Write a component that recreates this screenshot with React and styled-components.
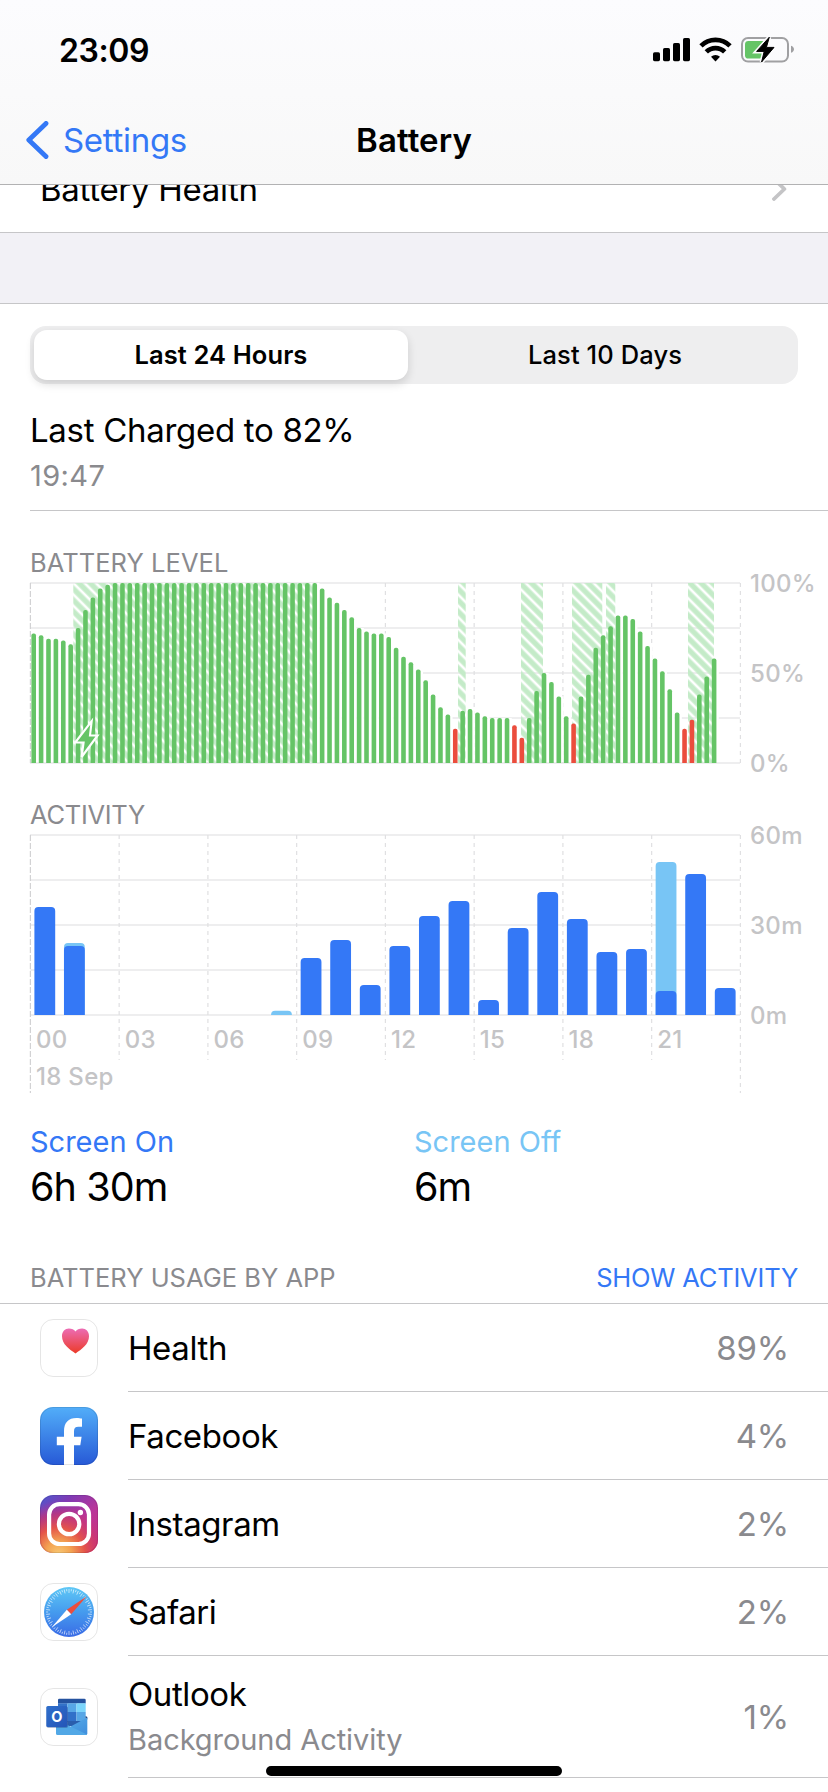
import React, { Component } from 'react';
import styled, { createGlobalStyle } from 'styled-components';

const GlobalStyle = createGlobalStyle`
	* {
		box-sizing: border-box;
	}
	body {
		margin: 0;
		background: #fff;
		color: #000;
		font-family: Inter, 'Liberation Sans', sans-serif;
		font-size: 33px;
	}
`;

const Screen = styled.div`
	width: 828px;
	height: 1792px;
	overflow: hidden;
	position: relative;
	background: #fff;
`;

const Header = styled.header`
	height: 185px;
	border-bottom: 1px solid #b2b2b3;
	background: linear-gradient(#fcfcfe, #f8f8f8);
`;

const StatusBar = styled.div`
	display: flex;
	justify-content: space-between;
	align-items: center;
	height: 100px;
	padding: 0 33px 0 59px;
`;

const Clock = styled.span`
	font-size: 32px;
	font-weight: 600;
	letter-spacing: -0.4px;
`;

const NavBar = styled.nav`
	display: grid;
	grid-template-columns: 1fr auto 1fr;
	align-items: center;
	height: 80px;
	padding: 0 26px;
`;

const BackLink = styled.a`
	display: flex;
	align-items: center;
	gap: 14px;
	color: #3478f6;
	letter-spacing: -0.3px;
`;

const NavTitle = styled.h1`
	margin: 0;
	font-size: 33px;
	font-weight: 600;
	letter-spacing: 0.1px;
`;

const HealthClip = styled.div`
	display: flex;
	align-items: flex-end;
	height: 48px;
	overflow: hidden;
	border-bottom: 1px solid #c6c6c8;
`;

const HealthRow = styled.div`
	flex: 1;
	display: flex;
	justify-content: space-between;
	align-items: center;
	height: 87px;
	flex-shrink: 0;
	padding: 0 41px 0 40px;
	letter-spacing: -0.3px;
`;

const Spacer = styled.div`
	height: 70px;
	background: #f2f1f6;
`;

const Panel = styled.section`
	border-top: 1px solid #c6c6c8;
	padding-top: 22px;
`;

const Segments = styled.div`
	display: flex;
	height: 58px;
	margin: 0 30px;
	padding: 4px;
	border-radius: 16px;
	background: #eeeeef;
`;

const Segment = styled.button`
	width: ${props => (props.$active ? '374px' : 'auto')};
	flex: ${props => (props.$active ? 'none' : '1')};
	border: 0;
	padding: ${props => (props.$active ? '0 0 2px' : '0 0 2px 8px')};
	border-radius: 13px;
	font-family: inherit;
	font-size: 25.5px;
	font-weight: ${props => (props.$active ? 600 : 500)};
	letter-spacing: 0.1px;
	color: #000;
	background: ${props => (props.$active ? '#fff' : 'transparent')};
	box-shadow: ${props =>
		props.$active ? '0 4px 10px rgba(0, 0, 0, 0.14)' : 'none'};
`;

const LastCharge = styled.div`
	margin: 26px 0 0 30px;
	padding-bottom: 16px;
	border-bottom: 1px solid #c6c6c8;
`;

const ChargeTitle = styled.div`
	line-height: 40px;
	letter-spacing: -0.3px;
`;

const ChargeTime = styled.div`
	margin-top: 7px;
	font-size: 29px;
	line-height: 37px;
	letter-spacing: 0.4px;
	color: #8a8a8e;
`;

const ChartTitle = styled.h2`
	margin: ${props => props.$top}px 0 0 30px;
	font-size: 25.5px;
	font-weight: 400;
	line-height: 32px;
	letter-spacing: ${props => props.$spacing}px;
	color: #8a8a8e;
`;

const Chart = styled.svg`
	display: block;
	overflow: visible;

	text {
		font-size: 24px;
		font-weight: 500;
		letter-spacing: 0.3px;
		fill: #c4c4c6;
	}
`;

const Totals = styled.div`
	display: grid;
	grid-template-columns: 384px 384px;
	margin: 26px 30px 0;
`;

const TotalLabel = styled.div`
	font-size: 29px;
	line-height: 37px;
	color: ${props => props.$color};
`;

const TotalValue = styled.div`
	margin-top: 4px;
	font-size: 39.5px;
	line-height: 47px;
	letter-spacing: -0.9px;
`;

const UsageHeader = styled.div`
	display: flex;
	justify-content: space-between;
	margin-top: 51px;
	padding: 0 30px 9px;
	border-bottom: 1px solid #c6c6c8;
	font-size: 25.5px;
	line-height: 32px;
	letter-spacing: 0;
	color: #8a8a8e;
`;

const ShowActivity = styled.a`
	letter-spacing: -0.2px;
	color: #3478f6;
`;

const AppRow = styled.div`
	display: flex;
	align-items: center;
	gap: 30px;
	height: ${props => (props.$tall ? 122 : 88)}px;
	padding-left: 40px;
`;

const AppBody = styled.div`
	flex: 1;
	align-self: stretch;
	display: flex;
	justify-content: space-between;
	align-items: center;
	padding-right: 39px;
	border-bottom: 1px solid #c6c6c8;
`;

const AppName = styled.div`
	line-height: 46px;
	letter-spacing: -0.4px;
`;

const AppNote = styled.div`
	font-size: 29px;
	line-height: 45px;
	letter-spacing: -0.06px;
	color: #8a8a8e;
`;

const AppPercent = styled.div`
	letter-spacing: -0.2px;
	color: #8a8a8e;
`;

const HomeIndicator = styled.div`
	position: absolute;
	left: 266px;
	bottom: 16px;
	width: 296px;
	height: 10px;
	border-radius: 5px;
	background: #000;
`;

// plot area: 24 hours over 710px, 180px high
const LEFT = 30;
const RIGHT = 740;
const TOP = 4;
const BOTTOM = 184;

// one reading every 15 minutes
const levels = [
	72, 71, 69, 69, 68, 66, 75, 85, 92, 97, 99,
	...Array(28).fill(100),
	97, 92, 89, 85, 81, 75, 73, 72, 72, 70, 64, 59, 56, 52, 46, 38, 31, 27,
	19, 29, 30, 28, 26, 25, 25, 25, 21, 14, 25, 40, 50, 45, 37, 26, 22, 37,
	49, 64, 71, 76, 82, 82, 80, 73, 65, 58, 51, 41, 28, 19, 24, 38, 48, 58
];
const low = [57, 65, 66, 73, 88, 89];
const charging = [
	[73.3, 313],
	[458, 465.7],
	[521, 543],
	[572, 602.3],
	[606, 615.3],
	[688, 714]
];

// [screen on, total] minutes per hour
const activity = [
	[36, 36], [23, 24], [0, 0], [0, 0], [0, 0], [0, 0], [0, 0], [0, 0],
	[0, 1.4], [19, 19], [25, 25], [10, 10], [23, 23], [33, 33], [38, 38],
	[5, 5], [29, 29], [41, 41], [32, 32], [21, 21], [22, 22], [8, 51],
	[47, 47], [9, 9]
];

const hours = ['00', '03', '06', '09', '12', '15', '18', '21'];

const apps = [
	{ name: 'Health', percent: 89, icon: 'health' },
	{ name: 'Facebook', percent: 4, icon: 'facebook' },
	{ name: 'Instagram', percent: 2, icon: 'instagram' },
	{ name: 'Safari', percent: 2, icon: 'safari' },
	{ name: 'Outlook', percent: 1, icon: 'outlook', note: 'Background Activity' }
];

const Grid = ({ end, outerEnd }) => (
	<g>
		{[0, 45, 90, 135, 180].map(y => (
			<path
				key={y}
				d={`M${LEFT} ${TOP + y}H${RIGHT}`}
				stroke="#eeeeef"
				strokeWidth="2"
			/>
		))}
		{[0, 1, 2, 3, 4, 5, 6, 7, 8].map(i => (
			<path
				key={i}
				d={`M${LEFT + 0.4 + i * 88.75} ${TOP}V${
					i === 0 || i === 8 ? outerEnd : end
				}`}
				stroke={i === 0 ? '#d2d2d4' : '#e0e0e2'}
				strokeWidth="1.2"
				strokeDasharray={i === 0 ? '6 2' : '4 4'}
			/>
		))}
	</g>
);

// bar with only its top corners rounded
const barPath = (x, w, h, r) => {
	const y = BOTTOM - h;
	const c = Math.min(r, h);
	return `M${x} ${BOTTOM}V${y + c}q0 ${-c} ${c} ${-c}h${w - 2 * c}q${c} 0 ${c} ${c}V${BOTTOM}z`;
};

const LevelChart = () => {
	const step = (RIGHT - LEFT) / 96;
	return (
		<Chart width="828" height="190" viewBox="0 0 828 190">
			<defs>
				<pattern
					id="hatch"
					width="8"
					height="8"
					patternUnits="userSpaceOnUse"
					patternTransform="translate(73.3 4) rotate(45)"
				>
					<rect y="1.4" width="8" height="5.3" fill="#c4ebc8" />
				</pattern>
			</defs>
			<Grid end={BOTTOM} outerEnd={BOTTOM} />
			{levels.map((level, i) => (
				<rect
					key={i}
					x={LEFT + 1 + i * step}
					y={BOTTOM - level * 1.8}
					width={step}
					height={level * 1.8 - 1}
					fill="#fff"
				/>
			))}
			{charging.map(([from, to]) => (
				<rect
					key={from}
					x={from}
					y={TOP}
					width={to - from}
					height={BOTTOM - TOP}
					fill="url(#hatch)"
				/>
			))}
			{levels.map((level, i) => (
				<path
					key={i}
					d={barPath(LEFT + (i + 0.5) * step - 2.3, 4.6, level * 1.8, 2)}
					fill={low.includes(i) ? '#eb4d3d' : '#65c466'}
				/>
			))}
			<path
				d="M91.7 142.2L90 156.5H97.6L81.6 178L83.6 163.5H75.2Z"
				fill="#65c466"
				stroke="#fff"
				strokeWidth="2.1"
			/>
			<text x="750" y="12.5">100%</text>
			<text x="750" y="102.5">50%</text>
			<text x="750" y="192.5">0%</text>
		</Chart>
	);
};

const ActivityChart = () => (
	<Chart width="828" height="266" viewBox="0 0 828 266">
		<Grid end={229} outerEnd={262} />
		{activity.map(([on, total], i) => {
			const x = LEFT + 4.4 + (i * 710) / 24;
			return (
				<g key={i}>
					{total > on && (
						<path d={barPath(x, 20.8, total * 3, 4)} fill="#78c5f5" />
					)}
					{on > 0 && <path d={barPath(x, 20.8, on * 3, 4)} fill="#3478f6" />}
				</g>
			);
		})}
		{hours.map((hour, i) => (
			<text key={hour} x={36 + i * 88.75} y="217">
				{hour}
			</text>
		))}
		<text x="36" y="253.5">18 Sep</text>
		<text x="750" y="12.5">60m</text>
		<text x="750" y="102.5">30m</text>
		<text x="750" y="192.5">0m</text>
	</Chart>
);

const StatusIcons = () => (
	<svg width="142" height="26" viewBox="653 37 142 26">
		<rect x="653" y="52.3" width="7" height="8.9" rx="1.6" />
		<rect x="663" y="48" width="7" height="13.2" rx="1.6" />
		<rect x="673" y="43" width="7" height="18.2" rx="1.6" />
		<rect x="683" y="38" width="7" height="23.2" rx="1.6" />
		<g fill="none" stroke="#000" strokeWidth="4.7">
			<path d="M701 45.8a20.5 20.5 0 0 1 29 0" />
			<path d="M706.3 51.9a13 13 0 0 1 18.4 0" />
		</g>
		<path d="M715.5 61.4L711 56.7a6.6 6.6 0 0 1 9 0z" />
		<rect
			x="742"
			y="38"
			width="46"
			height="23.6"
			rx="6"
			fill="none"
			stroke="#a0a0a2"
			strokeWidth="2"
		/>
		<path d="M791 45.8c4 1.2 4 5.8 0 7z" fill="#a0a0a2" />
		<rect x="745" y="41" width="22" height="17.6" rx="3.4" fill="#65c466" />
		<path
			d="M769.3 37.2L756.6 51.4h7.6L761.6 62L774 47.4h-7.6z"
			stroke="#fcfcfd"
			strokeWidth="4"
		/>
		<path
			d="M769.3 37.2L756.6 51.4h7.6L761.6 62L774 47.4h-7.6z"
			stroke="#000"
			strokeWidth="1"
			strokeLinejoin="round"
		/>
	</svg>
);

const icons = {
	health: (
		<g>
			<defs>
				<linearGradient id="heart" x1="0" y1="0" x2="0" y2="1">
					<stop offset="0" stopColor="#ec6cb4" />
					<stop offset="1" stopColor="#ec3b28" />
				</linearGradient>
			</defs>
			<path
				d="M35.5 34.4C29.5 30.5 22 25.3 22 17.3C22 12.5 25 9.6 28.9 9.6C31.8 9.6 34.3 10.7 35.5 12.4C36.7 10.7 39.2 9.6 42.1 9.6C46 9.6 49 12.5 49 17.3C49 25.3 41.5 30.5 35.5 34.4z"
				fill="url(#heart)"
			/>
		</g>
	),
	facebook: (
		<g>
			<defs>
				<linearGradient id="fb" x1="0" y1="0" x2="0" y2="1">
					<stop offset="0" stopColor="#52aef9" />
					<stop offset="1" stopColor="#2759d6" />
				</linearGradient>
			</defs>
			<rect width="58" height="58" rx="13" fill="url(#fb)" />
			<path
				d="M24 58V38.3H16.8V29.8H24V24.3C24 15.6 28.4 11 36.4 11C38.6 11 40.8 11.3 42 11.6V19.8H38.3C35.3 19.8 34 21.3 34 24.2V29.8H41.6L40.3 38.3H34V58z"
				fill="#fff"
			/>
		</g>
	),
	instagram: (
		<g>
			<defs>
				<linearGradient id="igBase" x1="0" y1="0" x2="0.9" y2="1">
					<stop offset="0" stopColor="#4a5bd0" />
					<stop offset="0.28" stopColor="#7f3ab4" />
					<stop offset="0.6" stopColor="#b9359a" />
					<stop offset="1" stopColor="#d0307a" />
				</linearGradient>
				<radialGradient id="igWarm" cx="0.32" cy="1.02" r="0.92">
					<stop offset="0" stopColor="#f8c873" />
					<stop offset="0.24" stopColor="#f3a352" />
					<stop offset="0.5" stopColor="#e4544a" />
					<stop offset="0.76" stopColor="#cb3670" stopOpacity="0.65" />
					<stop offset="1" stopColor="#b9359a" stopOpacity="0" />
				</radialGradient>
			</defs>
			<rect width="58" height="58" rx="13" fill="url(#igBase)" />
			<rect width="58" height="58" rx="13" fill="url(#igWarm)" />
			<g fill="none" stroke="#fff" strokeWidth="4.2">
				<rect x="9.1" y="9.1" width="39.9" height="39.9" rx="10.5" />
				<circle cx="29.1" cy="29" r="10.2" />
			</g>
			<circle cx="40.4" cy="17.5" r="2.7" fill="#fff" />
		</g>
	),
	safari: (
		<g>
			<defs>
				<linearGradient id="compass" x1="0" y1="0" x2="0" y2="1">
					<stop offset="0" stopColor="#5fc8f6" />
					<stop offset="0.5" stopColor="#459bee" />
					<stop offset="1" stopColor="#3a6be6" />
				</linearGradient>
			</defs>
			<circle cx="29" cy="29" r="25" fill="url(#compass)" />
			{Array.from({ length: 60 }, (_, i) => (
				<path
					key={i}
					d={i % 2 ? 'M29 6v2.2' : 'M29 6v4'}
					transform={`rotate(${i * 6} 29 29)`}
					stroke="#fff"
					strokeWidth="0.7"
					opacity="0.85"
				/>
			))}
			<path d="M46.8 13.2L26.8 26.8L31.2 31.2z" fill="#ec4d3d" />
			<path d="M11.8 44.2L26.8 26.8L31.2 31.2z" fill="#fff" />
		</g>
	),
	outlook: (
		<g>
			<defs>
				<linearGradient id="olBox" x1="0" y1="0" x2="1" y2="1">
					<stop offset="0" stopColor="#2f6fcb" />
					<stop offset="1" stopColor="#2455b8" />
				</linearGradient>
				<linearGradient id="olFlap" x1="0" y1="0" x2="1" y2="1">
					<stop offset="0" stopColor="#58b0ea" />
					<stop offset="1" stopColor="#3f8ddc" />
				</linearGradient>
			</defs>
			<path d="M18 12q0-1.3 1.3-1.3h25q1.4 0 1.4 1.3v3.4H18z" fill="#24529f" />
			<rect x="18" y="15.3" width="9.3" height="8.7" fill="#3372c8" />
			<rect x="27.3" y="15.3" width="9.2" height="8.7" fill="#57a6e6" />
			<rect x="36.5" y="15.3" width="9.2" height="8.7" fill="#7bd5fb" />
			<rect x="18" y="24" width="9.3" height="14" fill="#2960b5" />
			<rect x="27.3" y="24" width="9.2" height="10" fill="#3170c9" />
			<rect x="36.5" y="24" width="9.2" height="10" fill="#57a6e6" />
			<path d="M27.3 33H45.7V38H27.3z" fill="#2a5ead" />
			<path d="M45.6 28l1.7 1v2.5l-1.7-1z" fill="#1d3d77" />
			<path d="M47.3 29.5V45.4q0 1.6-1.6 1.6H20L31.5 38z" fill="url(#olFlap)" />
			<path d="M16 31.5L47 46.6q-.5.4-1.3.4H17.6q-1.6 0-1.6-1.6z" fill="#52a8e6" />
			<rect x="6.6" y="18.6" width="21.4" height="21.4" rx="1.8" fill="#1d3d77" opacity="0.35" />
			<rect x="6.3" y="18" width="21" height="21" rx="1.6" fill="url(#olBox)" />
			<text
				x="16.8"
				y="33.8"
				textAnchor="middle"
				fontSize="14.5"
				fontWeight="700"
				fill="#fff"
			>
				O
			</text>
		</g>
	)
};

const AppIcon = ({ name }) => (
	<svg width="58" height="58" viewBox="0 0 58 58">
		{icons[name]}
		<rect
			x="0.5"
			y="0.5"
			width="57"
			height="57"
			rx="12.7"
			fill="none"
			stroke="#000"
			strokeOpacity="0.1"
		/>
	</svg>
);

class App extends Component {
	constructor(props) {
		super(props);
		this.state = { range: 'Last 24 Hours' };
	}

	render() {
		const { range } = this.state;
		return (
			<Screen>
				<GlobalStyle />
				<Header>
					<StatusBar>
						<Clock>23:09</Clock>
						<StatusIcons />
					</StatusBar>
					<NavBar>
						<BackLink>
							<svg width="23" height="38" viewBox="0 0 23 38">
								<path
									d="M20 2.4L2.8 19L20 35.6"
									fill="none"
									stroke="#3478f6"
									strokeWidth="4.8"
									strokeLinecap="round"
									strokeLinejoin="round"
								/>
							</svg>
							Settings
						</BackLink>
						<NavTitle>Battery</NavTitle>
					</NavBar>
				</Header>
				<HealthClip>
					<HealthRow>
						<span>Battery Health</span>
						<svg width="15" height="24" viewBox="0 0 15 24">
							<path
								d="M2 2L12.4 12L2 22"
								fill="none"
								stroke="#c4c4c6"
								strokeWidth="3.8"
								strokeLinecap="round"
								strokeLinejoin="round"
							/>
						</svg>
					</HealthRow>
				</HealthClip>
				<Spacer />
				<Panel>
					<Segments>
						{['Last 24 Hours', 'Last 10 Days'].map(label => (
							<Segment
								key={label}
								$active={label === range}
								onClick={() => this.setState({ range: label })}
							>
								{label}
							</Segment>
						))}
					</Segments>
					<LastCharge>
						<ChargeTitle>Last Charged to 82%</ChargeTitle>
						<ChargeTime>19:47</ChargeTime>
					</LastCharge>
					<ChartTitle $top={36} $spacing={0.05}>
						BATTERY LEVEL
					</ChartTitle>
					<LevelChart />
					<ChartTitle $top={30} $spacing={-0.3}>
						ACTIVITY
					</ChartTitle>
					<ActivityChart />
					<Totals>
						<div>
							<TotalLabel $color="#3478f6">Screen On</TotalLabel>
							<TotalValue>6h 30m</TotalValue>
						</div>
						<div>
							<TotalLabel $color="#78c5f5">Screen Off</TotalLabel>
							<TotalValue>6m</TotalValue>
						</div>
					</Totals>
				</Panel>
				<UsageHeader>
					<span>BATTERY USAGE BY APP</span>
					<ShowActivity>SHOW ACTIVITY</ShowActivity>
				</UsageHeader>
				{apps.map(app => (
					<AppRow key={app.name} $tall={!!app.note}>
						<AppIcon name={app.icon} />
						<AppBody>
							<div>
								<AppName>{app.name}</AppName>
								{app.note && <AppNote>{app.note}</AppNote>}
							</div>
							<AppPercent>{app.percent}%</AppPercent>
						</AppBody>
					</AppRow>
				))}
				<HomeIndicator />
			</Screen>
		);
	}
}

export default App;
